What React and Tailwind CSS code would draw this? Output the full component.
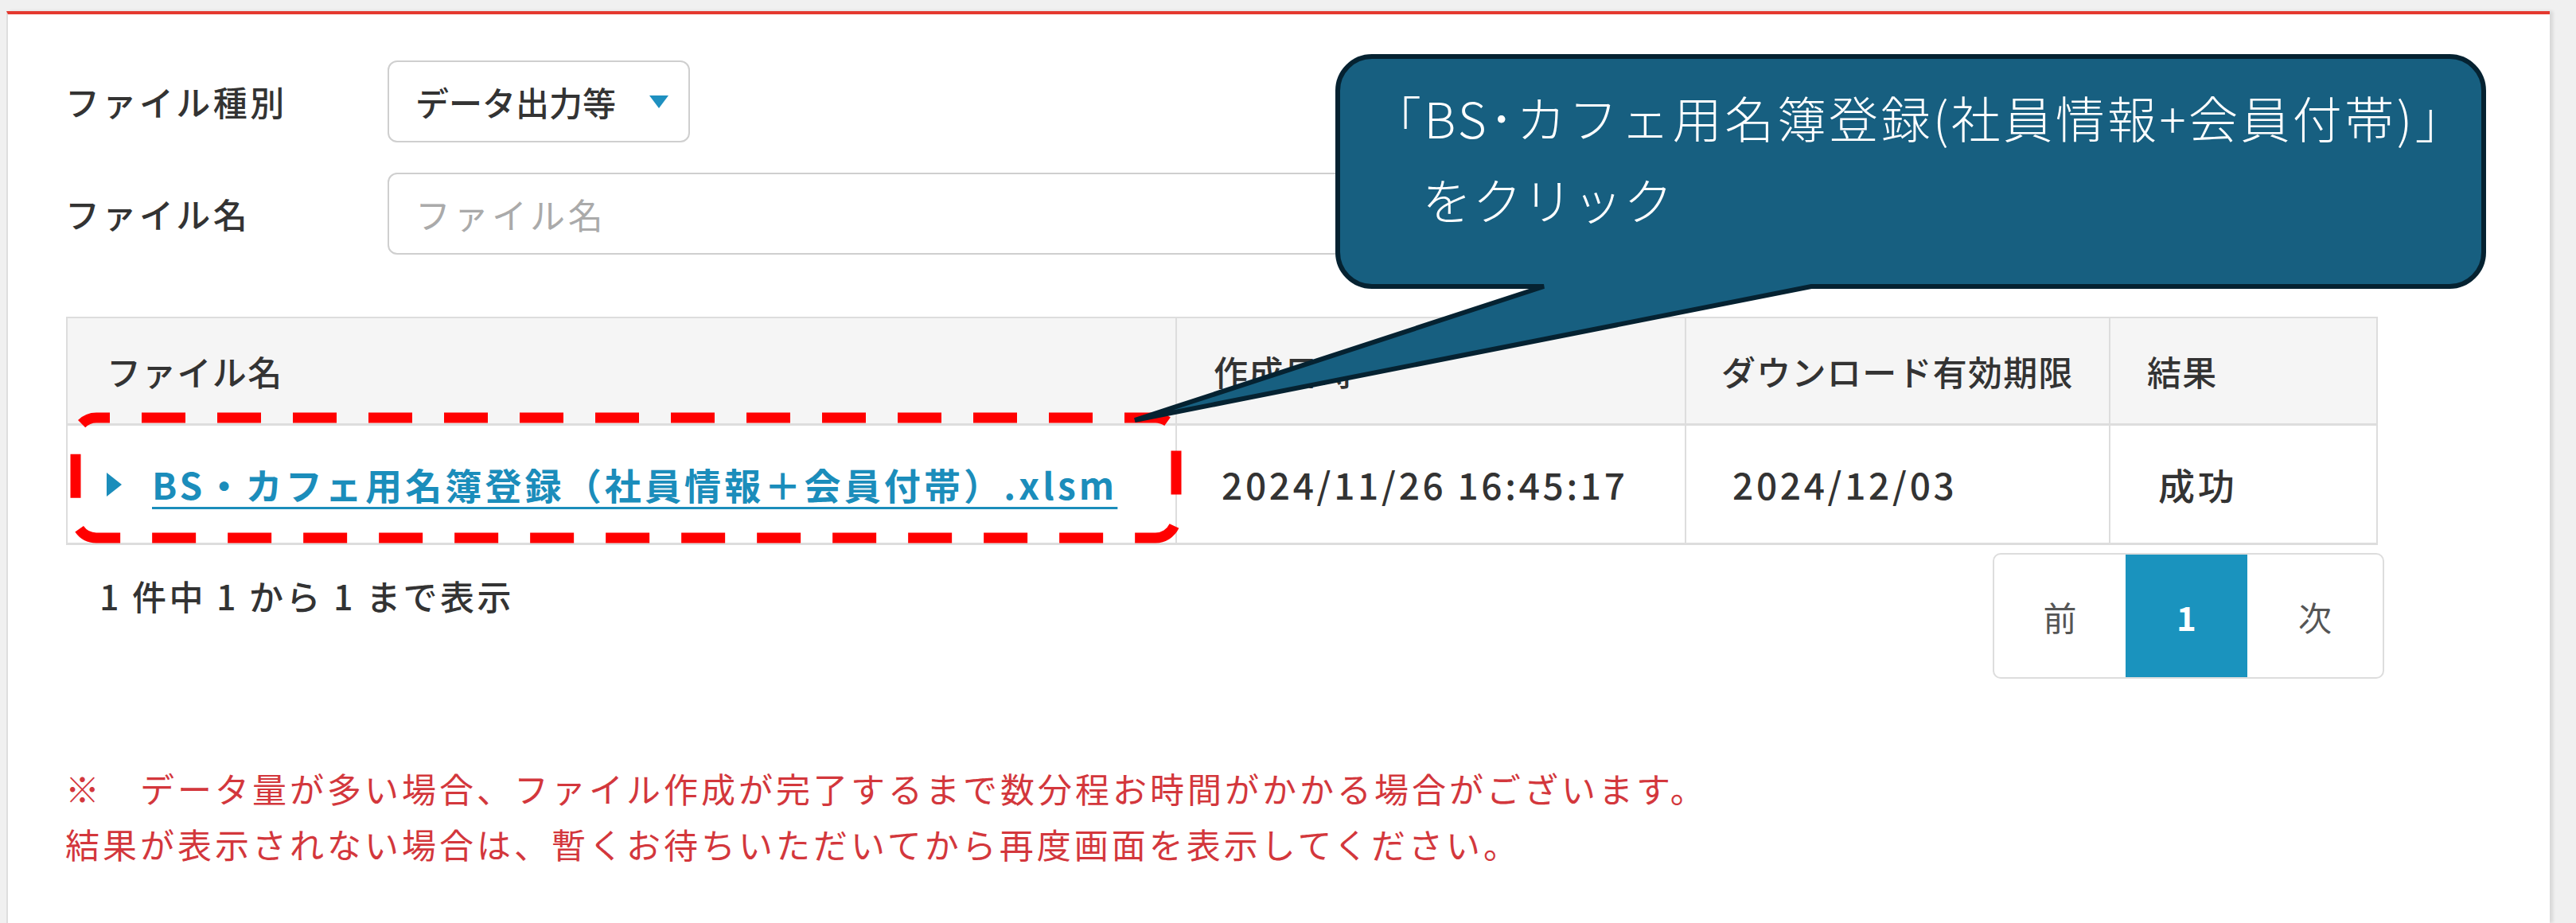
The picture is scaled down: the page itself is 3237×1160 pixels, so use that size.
import React from 'react';

const COLS = 'grid grid-cols-[1394px_640px_533px_334px]';

function Triangle({ className, points, w, h }) {
  return (
    <svg width={w} height={h} viewBox={`0 0 ${w} ${h}`} className={className}>
      <polygon points={points} fill="currentColor" />
    </svg>
  );
}

function Callout() {
  // annotation overlay: dashed frame + speech bubble
  return (
    <>
      <svg
        className="absolute left-0 top-0 pointer-events-none"
        width="3237"
        height="1160"
        viewBox="0 0 3237 1160"
      >
        <rect
          x="95"
          y="525"
          width="1383"
          height="151"
          rx="26"
          fill="none"
          stroke="#ff0000"
          strokeWidth="13"
          strokeDasharray="55 40"
          strokeDashoffset="38"
        />
        <path
          d="M1724 71 H3078 A43 43 0 0 1 3121 114 V317 A43 43 0 0 1 3078 360 H2276 L1426 528 L1940 360 H1724 A43 43 0 0 1 1681 317 V114 A43 43 0 0 1 1724 71 Z"
          fill="#175f80"
          stroke="#052231"
          strokeWidth="6"
          strokeLinejoin="miter"
        />
      </svg>
      <div className="absolute left-[1724px] top-[96px] text-white text-[62px] font-light tracking-[0.055em] leading-[103px] whitespace-pre pointer-events-none">
        <div>「BS･カフェ用名簿登録(社員情報+会員付帯)」</div>
        <div className="tracking-[0.02em]">　をクリック</div>
      </div>
    </>
  );
}

export default function App() {
  return (
    <div className="relative w-[3237px] h-[1160px] overflow-hidden bg-[#f0f0f0] font-['Noto_Sans_CJK_JP','Noto_Sans',sans-serif] text-[#333]">
      <div className="ml-[8px] mt-[14px] w-[3196px] h-[1146px] bg-white border-t-4 border-t-[#e4392f] border-l-2 border-l-[#dedede] shadow-[4px_0_4px_rgba(0,0,0,0.10)] pl-[72px] pt-[58px]">
        {/* search form */}
        <div className="flex items-center h-[103px]">
          <div className="w-[405px] text-[43px] tracking-[0.08em] font-medium">ファイル種別</div>
          <div className="w-[380px] h-full border-2 border-[#cfcfcf] rounded-[12px] flex items-center justify-between pl-[33px] pr-[25px]">
            <span className="text-[42px] font-medium">データ出力等</span>
            <Triangle className="text-[#1e90c0]" w={24} h={16} points="0,0 24,0 12,16" />
          </div>
        </div>
        <div className="flex items-center h-[103px] mt-[38px]">
          <div className="w-[405px] text-[43px] tracking-[0.08em] font-medium">ファイル名</div>
          <input
            readOnly
            placeholder="ファイル名"
            className="w-[1900px] h-full border-2 border-[#cfcfcf] rounded-[12px] pl-[33px] text-[44px] tracking-[0.09em] placeholder:text-[#aaaaaa] outline-none"
          />
        </div>

        {/* result table */}
        <div className="mt-[78px] w-[2905px] ml-[1px] border-2 border-b-0 border-[#dddddd]">
          <div className={`${COLS} h-[135px] bg-[#f5f5f5] border-b-[3px] border-[#dddddd] text-[43px] tracking-[0.03em] font-medium`}>
            <div className="flex items-center pl-[49px] border-r-2 border-[#dddddd]">ファイル名</div>
            <div className="flex items-center pl-[46px] border-r-2 border-[#dddddd]">作成日時</div>
            <div className="flex items-center pl-[44px] border-r-2 border-[#dddddd]">ダウンロード有効期限</div>
            <div className="flex items-center pl-[46px]">結果</div>
          </div>
          <div className={`${COLS} h-[150px] border-b-[3px] border-[#dddddd] text-[46px] tracking-[0.08em] font-medium`}>
            <div className="flex items-center pl-[49px] border-r-2 border-[#dddddd]">
              <Triangle className="text-[#1b8dbb] shrink-0 mr-[38px]" w={19} h={30} points="0,0 19,15 0,30" />
              <a className="text-[#1b8dbb] font-bold tracking-[0.09em] underline decoration-[3px] underline-offset-[9px] whitespace-nowrap">
                BS・カフェ用名簿登録（社員情報＋会員付帯）.xlsm
              </a>
            </div>
            <div className="flex items-center pl-[56px] border-r-2 border-[#dddddd]">2024/11/26 16:45:17</div>
            <div className="flex items-center pl-[58px] border-r-2 border-[#dddddd]">2024/12/03</div>
            <div className="flex items-center pl-[60px]">成功</div>
          </div>
        </div>

        {/* info + pager */}
        <div className="flex justify-between items-start w-[2914px]">
          <div className="mt-[33px] ml-[43px] text-[43px] leading-[60px] tracking-[0.08em] font-medium">
            1 件中 1 から 1 まで表示
          </div>
          <div className="mt-[10px] h-[158px] flex border-2 border-[#dddddd] rounded-[10px] overflow-hidden text-[42px]">
            <div className="w-[165px] flex items-center justify-center text-[#555]">前</div>
            <div className="w-[153px] flex items-center justify-center bg-[#1a93be] text-white font-bold">1</div>
            <div className="w-[170px] flex items-center justify-center text-[#555]">次</div>
          </div>
        </div>

        {/* notes */}
        <div className="mt-[102px] text-[43px] leading-[70px] tracking-[0.093em] text-[#d3373c]">
          <p>※　データ量が多い場合、ファイル作成が完了するまで数分程お時間がかかる場合がございます。</p>
          <p>結果が表示されない場合は、暫くお待ちいただいてから再度画面を表示してください。</p>
        </div>
      </div>

      <Callout />
    </div>
  );
}
